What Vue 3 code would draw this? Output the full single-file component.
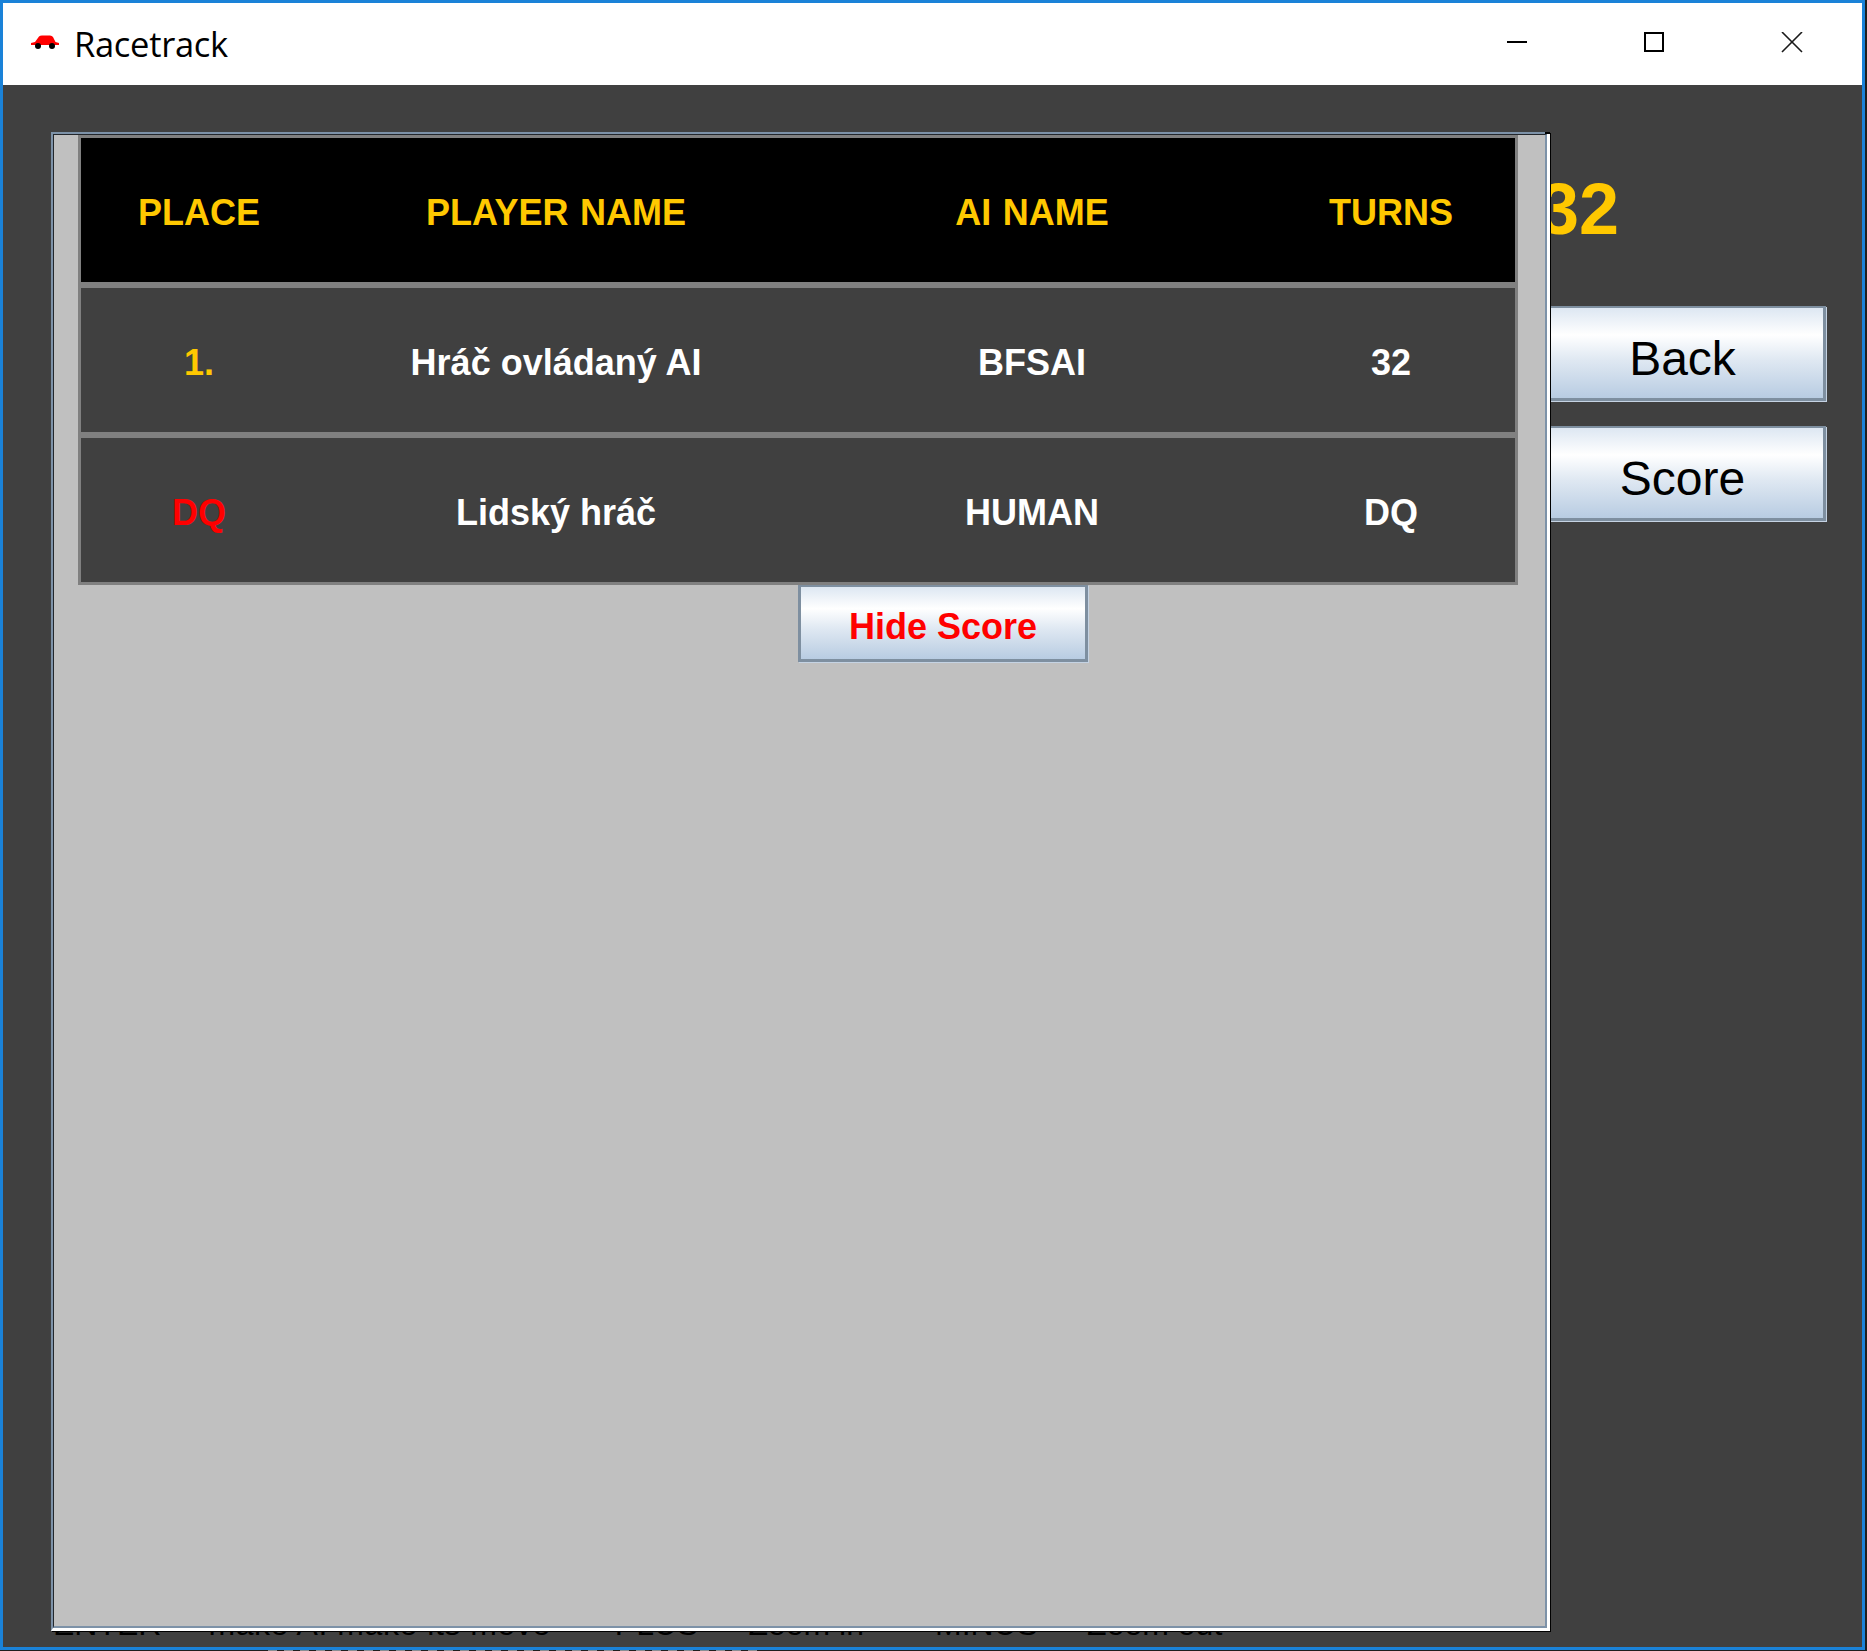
<template>
  <div class="screen">
    <div class="window">
      <header class="titlebar">
        <svg class="app-icon" width="30" height="18" viewBox="0 0 30 18">
          <path d="M1 11 L5 10 L9 4.5 Q10 3.5 12 3.5 H20 Q22 3.5 23 5 L25.5 10 L29 11 V13 H1 Z" fill="#ff0000" />
          <circle cx="8" cy="14" r="3" fill="#000" />
          <circle cx="22" cy="14" r="3" fill="#000" />
        </svg>
        <span class="app-title">Racetrack</span>
        <div class="win-controls">
          <svg class="win-btn" width="22" height="22" viewBox="0 0 22 22">
            <path d="M2 10 H22" stroke="#000" stroke-width="2" fill="none" />
          </svg>
          <svg class="win-btn" width="22" height="22" viewBox="0 0 22 22">
            <rect x="2" y="1" width="18" height="18" stroke="#000" stroke-width="2" fill="none" />
          </svg>
          <svg class="win-btn" width="22" height="22" viewBox="0 0 22 22">
            <path d="M1 0 L21 20 M21 0 L1 20" stroke="#1a1a1a" stroke-width="1.6" fill="none" />
          </svg>
        </div>
      </header>

      <main class="game">
        <div class="game-top">
          <aside class="side">
            <div class="turn-count">32</div>
            <button class="btn btn-side">Back</button>
            <button class="btn btn-side">Score</button>
          </aside>
        </div>

        <div class="legend">
          <span v-for="item in legend" :key="item.text" :class="item.cls">{{ item.text }}</span>
        </div>

        <section class="score-panel">
          <div class="score-inner">
            <div class="score-table">
              <div class="score-row head">
                <span>PLACE</span>
                <span>PLAYER NAME</span>
                <span>AI NAME</span>
                <span>TURNS</span>
              </div>
              <div v-for="row in rows" :key="row.name" class="score-row">
                <span :class="row.placeCls">{{ row.place }}</span>
                <span>{{ row.name }}</span>
                <span>{{ row.ai }}</span>
                <span>{{ row.turns }}</span>
              </div>
            </div>
            <button class="btn btn-hide">Hide Score</button>
          </div>
        </section>
      </main>
    </div>
    <div class="behind-strip"></div>
  </div>
</template>

<script setup>
const rows = [
  { place: '1.', placeCls: 'gold', name: 'Hráč ovládaný AI', ai: 'BFSAI', turns: '32' },
  { place: 'DQ', placeCls: 'red', name: 'Lidský hráč', ai: 'HUMAN', turns: 'DQ' }
]

const legend = [
  { text: 'ENTER', cls: 'k-enter' },
  { text: 'make AI make its move', cls: 'k-make' },
  { text: 'PLUS', cls: 'k-plus' },
  { text: 'Zoom in', cls: 'k-in' },
  { text: 'MINUS', cls: 'k-minus' },
  { text: 'Zoom out', cls: 'k-out' }
]
</script>

<style>
html,
body {
  margin: 0;
  background: #1e1e1e;
}
</style>

<style scoped>
.screen {
  width: 1867px;
  height: 1651px;
  background: #1e1e1e;
  overflow: hidden;
  font-family: "Liberation Sans", Arial, sans-serif;
}

.window {
  box-sizing: border-box;
  width: 1865px;
  height: 1650px;
  border: 3px solid #1a82d8;
  display: flex;
  flex-direction: column;
}

.behind-strip {
  height: 1px;
  width: 495px;
  margin-left: 268px;
  background: repeating-linear-gradient(90deg, #8a8f94 0 9px, #1e1e1e 9px 16px);
}

.titlebar {
  height: 82px;
  flex: none;
  background: #fff;
  display: flex;
  align-items: center;
  padding-left: 27px;
  position: relative;
}

.app-icon {
  margin-top: -6px;
  flex: none;
}

.app-title {
  margin-left: 14px;
  margin-top: -2px;
  font-family: "Open Sans", sans-serif;
  font-size: 34.5px;
  letter-spacing: -0.3px;
  color: #000;
}

.win-controls {
  margin-left: auto;
  display: flex;
  gap: 116px;
  padding-right: 59px;
  margin-top: -3px;
}

.win-btn {
  display: block;
}

.game {
  flex: 1;
  min-height: 0;
  position: relative;
  background: #404040;
  display: flex;
  flex-direction: column;
}

.game-top {
  flex: 1;
  display: flex;
  justify-content: flex-end;
  padding-right: 35px;
}

.side {
  width: 288px;
  padding-top: 88px;
  display: flex;
  flex-direction: column;
}

.turn-count {
  font-size: 72px;
  line-height: 72px;
  font-weight: 700;
  color: #ffc800;
  margin-bottom: 61px;
}

.btn {
  box-sizing: border-box;
  padding: 0;
  border: 3px solid #7e8fa0;
  border-top-width: 2px;
  box-shadow: 1px 1px 0 #c5d3e3;
  background: linear-gradient(180deg, #dde7f2 0%, #ffffff 30%, #dfe8f2 58%, #b8cce2 100%);
  font-family: "Liberation Sans", Arial, sans-serif;
  color: #000;
}

.btn-side {
  width: 287px;
  height: 95px;
  font-size: 48px;
  margin-bottom: 25px;
  padding-top: 10px;
}

.legend {
  position: relative;
  height: 41px;
  flex: none;
  font-size: 32px;
  line-height: 36px;
  color: #000;
  display: flex;
  padding-left: 50px;
  white-space: nowrap;
}

.k-make {
  margin-left: 47px;
  letter-spacing: 0.55px;
}

.k-plus {
  margin-left: 64px;
}

.k-in {
  margin-left: 50px;
}

.k-minus {
  margin-left: 71px;
}

.k-out {
  margin-left: 49px;
}

.score-panel {
  position: absolute;
  left: 48px;
  top: 47px;
  box-sizing: border-box;
  width: 1499px;
  height: 1499px;
  border-style: solid;
  border-width: 2px 3px 3px 2px;
  border-color: #7d92a8 #fff #fff #7d92a8;
  box-shadow: 1px 1px 0 #000;
}

.score-panel::after {
  content: "";
  position: absolute;
  right: -3px;
  top: -2px;
  width: 5px;
  height: 2px;
  background: #000;
}

.score-inner {
  box-sizing: border-box;
  height: 100%;
  background: #c0c0c0;
  border-style: solid;
  border-width: 1px 2px 2px 1px;
  border-color: #23272c #7d92a8 #7d92a8 #23272c;
  padding-left: 24px;
}

.score-table {
  width: 1440px;
  box-sizing: border-box;
  background: #808080;
  padding: 3px;
  display: flex;
  flex-direction: column;
  gap: 6px;
}

.score-row {
  height: 144px;
  box-sizing: border-box;
  padding-top: 5px;
  background: #404040;
  display: grid;
  grid-template-columns: 236px 478px 474px 244px;
  align-items: center;
  justify-items: center;
  font-size: 36px;
  font-weight: 700;
  color: #fff;
}

.score-row.head {
  background: #000;
  color: #ffc800;
  word-spacing: 1.5px;
}

.gold {
  color: #ffc800;
}

.red {
  color: #ff0000;
}

.btn-hide {
  display: block;
  width: 290px;
  height: 77px;
  margin-left: 720px;
  font-size: 36px;
  font-weight: 700;
  color: #ff0000;
  padding-top: 7px;
}
</style>
